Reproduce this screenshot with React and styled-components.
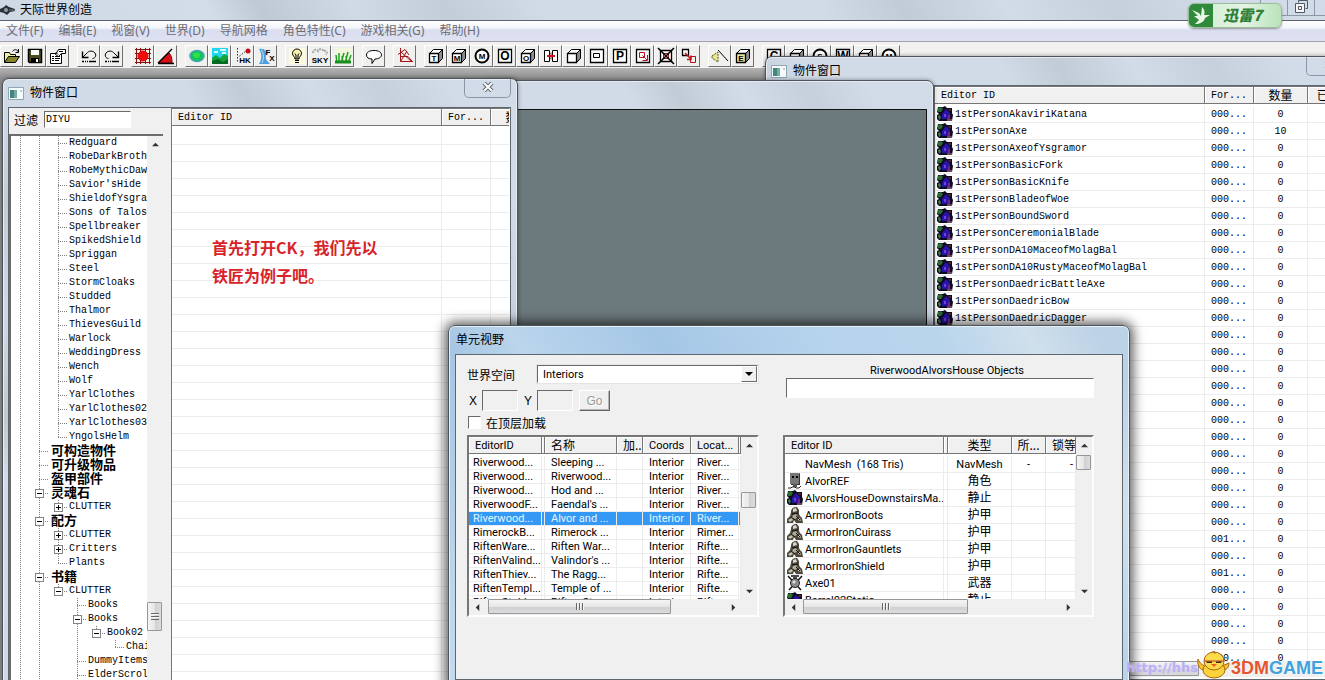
import React from "react";
import styled, { createGlobalStyle, css } from "styled-components";

const GlobalStyle = createGlobalStyle`
  * { box-sizing: border-box; }
  body {
    margin: 0;
    overflow: hidden;
    font-family: "Liberation Sans", "Noto Sans CJK SC", sans-serif;
    font-size: 12px;
    color: #000;
  }
  button, input, select { font: inherit; color: inherit; }
`;

const mono = css`
  font-family: "Liberation Mono", "Noto Sans CJK SC", monospace;
  font-size: 10px;
`;

const small = css`
  font-family: Roboto, "Noto Sans CJK SC", sans-serif;
  font-size: 11px;
`;

const glass = `linear-gradient(60deg, #cfd9e5 0%, #d3dde9 16%, #bfc9d3 20%, #d0dae6 27%,
  #c3cdd8 34%, #d1dbe7 41%, #d1dbe7 62%, #c2ccd7 68%, #d2dce8 76%, #c6d0dc 84%, #d2dce8 92%)`;

const blueGlass = `linear-gradient(60deg, #c6dcee 0%, #b3d0e9 12%, #a6c6e4 22%, #bad5ec 30%,
  #a5c7e6 46%, #b6d3ec 64%, #b9d5ec 78%, #d0e0ec 88%, #bcd2e6 96%)`;

const Desktop = styled.div`
  position: relative;
  display: flex;
  flex-direction: column;
  height: 100vh;
  overflow: hidden;
  background: #a3a3a3;
`;

const AppTitle = styled.header`
  display: flex;
  align-items: center;
  gap: 5px;
  height: 21px;
  flex: none;
  background: ${glass};
  border-bottom: 1px solid #5b6570;
`;

const AppName = styled.h1`
  flex: 1;
  margin: 0;
  font-size: 12px;
  font-weight: normal;
  line-height: 19px;
`;

const Caption = styled.div`
  display: flex;
  align-self: flex-start;
  height: 16px;
  border-bottom: 1px solid #8c98a6;
`;

const CaptionButton = styled.button`
  width: ${(p) => p.$width || "27px"};
  padding: 0;
  background: none;
  border: 0;
  border-left: 1px solid #8c98a6;
`;

const MenuBar = styled.nav`
  display: flex;
  gap: 15px;
  height: 21px;
  flex: none;
  padding: 0 6px;
  align-items: center;
  background: linear-gradient(#fff 0%, #f4f5fb 35%, #dadef0 45%, #dfe2f2 100%);
  border-bottom: 1px solid #a2a2a6;
`;

const MenuItem = styled.button`
  padding: 0;
  border: 0;
  background: none;
  color: #6b6d75;
  font-family: "Noto Sans", "Noto Sans CJK SC", sans-serif;
  font-size: 12px;
  line-height: 18px;
  white-space: nowrap;
`;

const Toolbar = styled.div`
  display: flex;
  gap: 8px;
  height: 26px;
  flex: none;
  padding-top: 3px;
  background: #f2f1f0;
  overflow: hidden;
`;

const ToolGroup = styled.div`
  display: flex;
`;

const ToolButton = styled.button`
  display: flex;
  align-items: center;
  justify-content: center;
  width: 23px;
  height: 22px;
  padding: 0;
  background: #f0f0ee;
  border: 1px solid;
  border-color: #fff #6f6f6f #6f6f6f #fff;
`;

const Workspace = styled.main`
  flex: 1;
  background: linear-gradient(#b4b4b4, #8f8f8f 10px, #909090);
`;

const Frame = styled.section`
  position: absolute;
  display: flex;
  flex-direction: column;
  padding: 0 6px 6px 5px;
  border: 1px solid #4d545c;
  border-radius: 7px 7px 0 0;
  background: ${(p) => (p.$active ? blueGlass : glass)};
  box-shadow: ${(p) =>
    p.$active
      ? "inset 0 0 0 1px #e6f0f8, 0 0 12px 3px rgba(0,0,0,.65)"
      : "inset 0 0 0 1px #e7ecf2, 0 0 4px rgba(0,0,0,.4)"};
`;

const FarObjects = styled(Frame)`
  left: 765px;
  top: 56px;
  right: -35px;
  bottom: -7px;
`;
const RenderFrame = styled(Frame)`
  left: 480px;
  top: 80px;
  width: 454px;
  bottom: -40px;
`;
const NearObjects = styled(Frame)`
  left: 2px;
  top: 78px;
  width: 516px;
  bottom: -40px;
`;
const CellFrame = styled(Frame)`
  left: 448px;
  top: 325px;
  width: 682px;
  bottom: -7px;
  padding-left: 6px;
`;

const FrameTitle = styled.div`
  display: flex;
  align-items: center;
  gap: 5px;
  height: 28px;
  flex: none;
`;

const FrameName = styled.h2`
  flex: 1;
  margin: 0;
  padding-left: 1px;
  font-size: 12px;
  font-weight: normal;
  line-height: 26px;
`;

const CloseButton = styled.button`
  align-self: flex-start;
  width: 47px;
  height: 19px;
  padding: 0;
  background: none;
  border: 1px solid #8b97a5;
  border-top: 0;
  border-radius: 0 0 5px 5px;
`;

const Client = styled.div`
  display: flex;
  flex: 1;
  min-height: 0;
  background: #f0f0f0;
  border: 1px solid #5e666e;
`;

const Viewport3D = styled(Client)`
  background: #6c797d;
  border-color: #111;
`;

const Side = styled.aside`
  display: flex;
  flex-direction: column;
  width: 162px;
  flex: none;
`;

const FilterRow = styled.label`
  display: flex;
  align-items: center;
  gap: 6px;
  height: 26px;
  flex: none;
  padding: 0 5px 4px;
`;

const TextBox = styled.input`
  min-width: 0;
  width: ${(p) => p.$width || "100%"};
  height: ${(p) => p.$height || "20px"};
  padding: 0 0 0 1px;
  border: 1px solid;
  border-color: #6a6a6a #fff #fff #6a6a6a;
  border-radius: 0;
  outline: 0;
  background: ${(p) => (p.disabled ? "#f0f0f0" : "#fff")};
`;

const FilterBox = styled(TextBox)`
  ${mono}
`;

const TreeBox = styled.div`
  display: flex;
  flex: 1;
  min-height: 0;
  margin-right: 8px;
  background: #fff;
  border: 2px solid #6c6c6c;
  border-right: 0;
`;

const TreeList = styled.ul`
  flex: 1;
  min-width: 0;
  margin: 0;
  padding: 0;
  overflow: hidden;
  list-style: none;
  ${mono}
`;

const TreeRow = styled.li`
  display: flex;
  height: 14px;
  line-height: 14px;
  white-space: nowrap;
`;

const vDots = "repeating-linear-gradient(#808080 0 1px, transparent 1px 2px)";
const hDots = "repeating-linear-gradient(90deg, #808080 0 1px, transparent 1px 2px)";

const guides = {
  v: `${vDots} 9px 0 / 1px 100% no-repeat`,
  t: `${vDots} 9px 0 / 1px 100% no-repeat, ${hDots} 9px 7px / 9px 1px no-repeat`,
  l: `${vDots} 9px 0 / 1px 7px no-repeat, ${hDots} 9px 7px / 9px 1px no-repeat`,
  "-": "none",
};

const Guide = styled.span`
  display: flex;
  align-items: center;
  justify-content: center;
  width: 19px;
  flex: none;
  background: ${(p) => guides[p.$kind]};
`;

const Toggle = styled.button`
  width: 9px;
  height: 9px;
  padding: 0;
  border: 1px solid #848484;
  background:
    linear-gradient(#000, #000) 50% 50% / 5px 1px no-repeat,
    ${(p) => (p.$open ? "" : "linear-gradient(#000, #000) 50% 50% / 1px 5px no-repeat,")}
    #fff;
`;

const TreeText = styled.span`
  padding-left: 1px;
  ${(p) =>
    p.$bold &&
    css`
      padding-left: 2px;
      font-family: "Noto Sans CJK SC", sans-serif;
      font-size: 13px;
      font-weight: bold;
      line-height: 12px;
    `}
`;

const Bar = styled.div`
  display: flex;
  flex-direction: ${(p) => (p.$vertical ? "column" : "row")};
  flex: none;
  ${(p) => (p.$vertical ? "width: 16px;" : "height: 16px;")}
  background: #f0f0f0;
`;

const Track = styled.div`
  flex: 1;
  min-width: 0;
  min-height: 0;
  display: flex;
  flex-direction: ${(p) => (p.$vertical ? "column" : "row")};
`;

const Thumb = styled.div`
  display: flex;
  align-items: center;
  justify-content: center;
  flex: none;
  border: 1px solid #979797;
  border-radius: 1px;
  background: linear-gradient(
    ${(p) => (p.$vertical ? "90deg" : "180deg")},
    #f5f5f5,
    #e6e6e8 50%,
    #cfd0d2 52%,
    #dcdcde
  );
  ${(p) =>
    p.$vertical
      ? css`
          width: 15px;
          height: ${p.$size};
          margin-top: ${p.$start};
        `
      : css`
          height: 15px;
          width: ${p.$size};
          margin-left: ${p.$start};
        `}
`;

const Grip = styled.i`
  width: 8px;
  height: 7px;
  background: repeating-linear-gradient(
    ${(p) => (p.$vertical ? "180deg" : "90deg")},
    #666 0 1px,
    #f4f4f4 1px 2px,
    transparent 2px 3px
  );
`;

const Arrow = styled.button`
  display: flex;
  align-items: center;
  justify-content: center;
  width: 16px;
  height: 16px;
  flex: none;
  padding: 0;
  border: 0;
  background: none;
`;

const ListBox = styled.div`
  display: flex;
  flex-direction: column;
  flex: 1;
  min-width: 0;
  min-height: 0;
  background: #fff;
  border: 2px solid;
  border-color: #767676 #fdfdfd #fdfdfd #767676;
`;

const ObjectBox = styled(ListBox)`
  border-top-width: 1px;
  border-left-width: 1px;
  border-right-width: 1px;
`;

const ListBody = styled.div`
  display: flex;
  flex: 1;
  min-height: 0;
`;

const TableWrap = styled.div`
  flex: 1;
  min-width: 0;
  overflow: hidden;
`;

const ScrollRow = styled.div`
  padding-right: 16px;
  background: #f0f0f0;
`;

const Table = styled.table`
  width: 100%;
  table-layout: fixed;
  border-collapse: separate;
  border-spacing: 0;
  ${(p) => (p.$mono ? mono : small)}

  th, td {
    padding: 0 0 0 6px;
    text-align: left;
    font-weight: normal;
    white-space: nowrap;
    overflow: hidden;
  }
  th {
    height: 17px;
    padding-top: 2px;
    line-height: 14px;
    background: #f0f0f0;
    border-right: 1px solid #777;
    border-bottom: 1px solid #777;
    box-shadow: inset 1px 1px #fff;
  }
  th:lang(zh) {
    padding-top: 0;
    font-family: "Noto Sans CJK SC", sans-serif;
    font-size: 12px;
  }
  tbody::before {
    content: "";
    display: table-row;
    height: 2px;
  }
  td {
    height: ${(p) => p.$row};
    line-height: 13px;
    border-right: 1px solid #ececec;
    border-bottom: 1px solid #ececec;
  }
  td:first-child {
    padding-left: 4px;
  }
`;

const Row = styled.tr`
  ${(p) =>
    p.$selected &&
    css`
      background: #3498f5;
      color: #e4f6ff;
    `}
`;

const Th = styled.th`
  && {
    ${(p) => p.$center && "text-align: center; padding: 0;"}
  }
`;

const Td = styled.td`
  && {
    ${(p) => p.$center && "text-align: center; padding: 0;"}
    ${(p) => p.$zh && "font-size: 12px;"}
    ${(p) => p.$right && "text-align: right; padding: 0 2px 0 0;"}
  }
`;

const NameCell = styled.span`
  display: flex;
  align-items: center;
  gap: 2px;
  height: 16px;
  margin-left: -2px;
  white-space: pre;
  svg { flex: none; }
`;

const Note = styled.p`
  position: absolute;
  left: 209px;
  top: 154px;
  margin: 0;
  color: #d8232a;
  font-family: "Noto Sans CJK SC", sans-serif;
  font-size: 16px;
  font-weight: bold;
  line-height: 28px;
`;

const CellGrid = styled.div`
  flex: 1;
  display: grid;
  grid-template-columns: 292fr 311fr;
  grid-template-rows: 71px 182px;
  gap: 0 24px;
  padding: 9px 28px 0 11px;
`;

const Stack = styled.div`
  display: flex;
  flex-direction: column;
`;

const SpaceRow = styled.label`
  display: flex;
  align-items: center;
  gap: 21px;
  white-space: nowrap;
`;

const SelectWrap = styled.span`
  position: relative;
  flex: 1;
  display: flex;
`;

const Select = styled.select`
  flex: 1;
  height: 20px;
  padding: 0 5px;
  appearance: none;
  && { ${small} }
  background: #fff;
  border: 2px solid;
  border-color: #6a6a6a #fff #fff #6a6a6a;
  border-radius: 0;
  outline: 1px solid #e4e4e4;
  outline-offset: -1px;
`;

const DropMark = styled.span`
  position: absolute;
  right: 2px;
  top: 2px;
  display: flex;
  align-items: center;
  justify-content: center;
  width: 16px;
  height: 16px;
  pointer-events: none;
  background: #f0f0f0;
  border: 1px solid;
  border-color: #fff #6a6a6a #6a6a6a #fff;
`;

const CoordRow = styled.div`
  display: flex;
  gap: 6px;
  margin-top: 6px;
  padding-left: 2px;
`;

const Coord = styled.label`
  display: flex;
  align-items: center;
  gap: 5px;
`;

const GoButton = styled.button`
  width: 31px;
  height: 21px;
  padding: 0;
  font-size: 12px;
  background: #f0f0f0;
  border: 1px solid;
  border-color: #fff #666 #666 #fff;
  box-shadow: inset -1px -1px #b4b4b4;
  &:disabled {
    color: #9a9a9a;
    text-shadow: 1px 1px #fff;
  }
`;

const CheckRow = styled.label`
  display: flex;
  align-items: center;
  gap: 5px;
  height: 17px;
  margin-top: 3px;
`;

const Check = styled.input`
  appearance: none;
  width: 13px;
  height: 13px;
  margin: 0 0 0 1px;
  background: #fff;
  border: 1px solid;
  border-color: #6a6a6a #fff #fff #6a6a6a;
`;

const SearchLabel = styled.label`
  display: flex;
  flex-direction: column;
  align-items: center;
  padding-left: 3px;
  ${small}
`;

const SearchCaption = styled.span`
  padding-left: 14px;
  line-height: 14px;
`;

const ThunderBadge = styled.div`
  position: absolute;
  right: 43px;
  top: 3px;
  display: flex;
  width: 94px;
  height: 25px;
  overflow: hidden;
  border: 1px solid #9dbd9d;
  border-radius: 6px;
  background: linear-gradient(90deg, #cdeccf, #e4f4e4 60%, #b9e3ba);
  box-shadow: 0 1px 2px rgba(0, 0, 0, 0.4);
`;

const ThunderName = styled.span`
  flex: 1;
  padding-left: 10px;
  color: #2f8038;
  font-family: "Noto Sans CJK SC", sans-serif;
  font-size: 15px;
  font-weight: 900;
  font-style: italic;
  line-height: 22px;
`;

const SiteLink = styled.a`
  position: absolute;
  right: 127px;
  bottom: 4px;
  color: #bdb0f2;
  font-family: "DejaVu Sans", sans-serif;
  font-size: 13px;
  font-weight: bold;
  line-height: 16px;
  text-decoration: none;
  text-shadow: 0 0 2px #d9d2fa;
`;

const SiteLogo = styled.div`
  position: absolute;
  right: 2px;
  bottom: 1px;
  display: flex;
  align-items: flex-end;
  color: #e4562f;
  font-family: "Liberation Sans", sans-serif;
  font-size: 18px;
  font-weight: bold;
  line-height: 22px;
  text-shadow: 0 0 2px #fff;
  b { color: #3fa3dc; }
`;

/* ---------- icons ---------- */

const Pic = ({ children, size = 18 }) => (
  <svg width={size} height={size} viewBox="0 0 18 18" fill="none" stroke="#000" strokeWidth="1" aria-hidden="true">
    {children}
  </svg>
);

const Letter = ({ x = 7, y = 14, size = 8, children }) => (
  <text x={x} y={y} fontSize={size} fontWeight="bold" fontFamily="Liberation Sans, sans-serif" textAnchor="middle" fill="#000" stroke="none">
    {children}
  </text>
);

const Cube = ({ letter, tint = "#fff" }) => (
  <Pic>
    <path d="M11.5 6.5 15.5 2.5V11.5L11.5 15.5z" fill="#8d8d8d" />
    <path d="M2.5 6.5 6.5 2.5H15.5L11.5 6.5z" fill="#fff" />
    <path d="M2.5 6.5H11.5V15.5H2.5z" fill={tint} strokeWidth="1.3" />
    {letter && <Letter>{letter}</Letter>}
  </Pic>
);

const Ring = ({ letter }) => (
  <Pic>
    <circle cx="9" cy="9" r="6.5" fill="#fff" strokeWidth="2" />
    <Letter x={9} y={12}>{letter}</Letter>
  </Pic>
);

const Square = ({ letter }) => (
  <Pic>
    <path d="M2.5 2.5H15.5V15.5H2.5z" fill="#fff" strokeWidth="1.3" />
    <Letter x={9} y={13} size={12}>{letter}</Letter>
  </Pic>
);

const icons = {
  open: (
    <Pic>
      <path d="M1.5 15.5V5.5H6.5L7.5 7.5H12.5V9.5" fill="#f1eda2" />
      <path d="M1.5 15.5 5.5 9.5H16.5L12.5 15.5z" fill="#87852b" />
      <path d="M9.5 4.5C11 2 14 2 15.5 5M15.5 2V5.5H12.5" />
    </Pic>
  ),
  save: (
    <Pic>
      <path d="M2.5 2.5H15.5V15.5H3.5L2.5 14.5z" fill="#4c4c1f" strokeWidth="1.5" />
      <path d="M5 3H13V8H5z" fill="#fff" stroke="none" />
      <path d="M5 11H13V15H5z" fill="#000" stroke="none" />
      <path d="M10 12H12V15H10z" fill="#fff" stroke="none" />
    </Pic>
  ),
  props: (
    <Pic>
      <path d="M1.5 6.5H12.5V16.5H1.5z" fill="#fff" />
      <path d="M3 9.5H5M6 9.5H11M3 11.5H5M6 11.5H11M3 13.5H5M6 13.5H10" />
      <path d="M6.5 7.5 9.5 2.5H16.5V6.5H12.5L9.5 9.5z" fill="#fff" />
      <path d="M10 4.5H14M7 5.5 9 7.5" />
    </Pic>
  ),
  undo: (
    <Pic>
      <path d="M2.5 4.5V10.5H8.5" strokeWidth="1.4" />
      <path d="M3 10 7.5 5.5C10 3 14.500 4 15.500 7S14 11.500 12.500 11.500" />
      <path d="M2 14.500H4M5 14.500H6M7 14.500H8M9 14.500H16" strokeWidth="1.500" />
    </Pic>
  ),
  redo: (
    <Pic>
      <path d="M15.5 4.5V10.5H9.500" strokeWidth="1.4" />
      <path d="M15 10 10.500 5.500C8 3 3.500 4 2.500 7S4 11.500 5.500 11.500" />
      <path d="M2 14.500H4M5 14.500H6M7 14.500H8M9 14.500H16" strokeWidth="1.500" />
    </Pic>
  ),
  gridSnap: (
    <Pic>
      <path d="M2.5 1V17M6.5 1V17M11.5 1V17M15.5 1V17M1 2.5H17M1 6.5H17M1 11.5H17M1 15.5H17" stroke="#811" />
      <circle cx="9" cy="9" r="5" fill="#f20d0d" stroke="#d00" />
    </Pic>
  ),
  angleSnap: (
    <Pic>
      <path d="M1 16 12 6C15 9 15 13 15 16z" fill="#d40f18" stroke="#700" />
      <path d="M1 16.5H17M1 16 15 2" strokeWidth="1.3" />
    </Pic>
  ),
  globe: (
    <Pic>
      <ellipse cx="9" cy="9" rx="7" ry="5.500" fill="#12c45a" stroke="#4aa3b4" strokeWidth="1.500" />
      <path d="M5 7C7 5 11 5 12 7S10 12 8 11 5 10 5 7z" fill="#2de04c" stroke="none" />
    </Pic>
  ),
  land: (
    <Pic>
      <path d="M1 1H17V17H1z" fill="#21d7ee" stroke="none" />
      <path d="M3 5H7M9 3H15M11 6H15" stroke="#d8fbff" strokeWidth="2" />
      <path d="M1 11 5 8 9 11 13 7 17 9V17H1z" fill="#13a63c" stroke="none" />
      <path d="M1 17V14L7 12 12 15 17 12V17z" fill="#066b21" stroke="none" />
    </Pic>
  ),
  havok: (
    <Pic>
      <path d="M3.5 1V16M3 11 12 4" stroke="#333" strokeDasharray="1.5 1.5" />
      <circle cx="14" cy="4" r="2.5" fill="#c3101e" stroke="none" />
      <Letter x={11} y={16} size={8}>HK</Letter>
    </Pic>
  ),
  effects: (
    <Pic>
      <path d="M2 2C8 1 10 5 9 9S11 14 13 17H2C5 12 5 7 2 2z" fill="#4f9fe0" stroke="none" />
      <path d="M4 3C7 6 7 12 5 16" stroke="#bfe0f8" />
      <Letter x={11} y={8} size={8}>F</Letter>
      <Letter x={15} y={14} size={8}>X</Letter>
    </Pic>
  ),
  light: (
    <Pic>
      <path d="M1 1H17V17H1z" fill="#fdfae0" stroke="none" />
      <path d="M7 12C7 9.5 4.5 9 4.5 6.5A4.5 4.5 0 0 1 13.5 6.5C13.5 9 11 9.5 11 12z" fill="#f6f2b4" />
      <path d="M7 6.5 8 8V12M11 6.5 10 8V12M7 13.5H11M7 15.5H11" />
    </Pic>
  ),
  sky: (
    <Pic>
      <path d="M2 6C2 2 6 2 7 4 9 1 12 2 12 4 15 3 17 5 15 8" stroke="#a9a9a9" strokeWidth="2" strokeDasharray="2 1" />
      <Letter x={9} y={16} size={8}>SKY</Letter>
    </Pic>
  ),
  grass: (
    <Pic>
      <path d="M1 1H17V17H1z" fill="#f3f8dc" stroke="none" />
      <path d="M3 16 2 8M5 16 5 6M7 16 10 6M9 16 8 9M11 16 14 5M13 16 12 9M14 16 17 8" stroke="#1ba321" strokeWidth="1.5" />
      <path d="M1 15H17" stroke="#1c8a24" strokeWidth="3" />
    </Pic>
  ),
  talk: (
    <Pic>
      <path d="M9 3.5C14 3.5 16.5 5.5 16.5 8S13 12 10 12L7 16.5V12C3.5 12 1.5 10.5 1.5 8S4 3.5 9 3.5z" fill="#fff" />
    </Pic>
  ),
  navmesh: (
    <Pic>
      <path d="M4.5 1V14.5H17M2 7.500 9 2.500 13 8M4.500 14.500 11 4M5 5 15.500 14.500M5 9.500H12L16 14" stroke="#a3141b" />
    </Pic>
  ),
  portal: (
    <Pic>
      <path d="M2.5 3.5H7.5V14.5H2.5zM10.5 3.5H15.5V14.5H10.5z" fill="#fff" />
      <path d="M5 9H13" stroke="#c3141b" strokeWidth="2" />
      <path d="M9 5.500V12.500" stroke="#c3141b" />
    </Pic>
  ),
  room: (
    <Pic>
      <path d="M2.5 2.5H15.5V15.5H2.5z" fill="#fff" strokeWidth="1.3" />
      <path d="M5.5 6.5H11.5V10.5H5.5z" />
    </Pic>
  ),
  roomLink: (
    <Pic>
      <path d="M2.5 2.5H15.5V15.5H2.5z" fill="#fff" strokeWidth="1.3" />
      <path d="M5.5 5.5H10.5V10.5H5.5zM13.5 8V13.5H8.5M8.5 8.5 13 13" stroke="#b5131b" />
    </Pic>
  ),
  cross: (
    <Pic>
      <path d="M3.5 3.5H14.5V14.5H3.5z" fill="#fff" strokeWidth="1.3" />
      <path d="M6.5 6.5H11.5V11.5H6.5z" stroke="#b5131b" />
      <path d="M1 1 17 17M17 1 1 17" strokeWidth="1.6" />
    </Pic>
  ),
  link: (
    <Pic>
      <path d="M2.5 2.5H8.5V8.5H2.5z" fill="#fff" strokeWidth="1.3" />
      <path d="M10.5 9.5H15.5V15.5H10.5z" stroke="#a3141b" />
      <path d="M5 6 11 12M11 8.500V12.500H7" stroke="#c3141b" strokeWidth="1.500" />
    </Pic>
  ),
  sound: (
    <Pic>
      <path d="M7 3 17 14" />
      <path d="M1 9 7 5V15L1 11z" fill="#e6e68a" stroke="#55551c" strokeDasharray="2 1" />
    </Pic>
  ),
};

const toolGroups = [
  [["打开", icons.open], ["保存", icons.save], ["属性", icons.props]],
  [["撤销", icons.undo], ["重做", icons.redo]],
  [["网格", icons.gridSnap], ["角度", icons.angleSnap]],
  [["世界", icons.globe], ["地形", icons.land], ["物理", icons.havok], ["特效", icons.effects]],
  [["灯光", icons.light], ["天空", icons.sky], ["草地", icons.grass]],
  [["对话", icons.talk]],
  [["导航", icons.navmesh]],
  [
    ["T", <Cube letter="T" />],
    ["M", <Cube letter="M" />],
    ["标记", <Ring letter="M" />],
    ["遮挡", <Square letter="O" />],
    ["O", <Cube letter="O" />],
    ["入口", icons.portal],
    ["盒子", <Cube />],
    ["房间", icons.room],
    ["平面", <Square letter="P" />],
    ["房间连接", icons.roomLink],
    ["删除连接", icons.cross],
    ["连接", icons.link],
  ],
  [["声音", icons.sound], ["声音盒", <Cube letter="E" tint="#e6e6a0" />]],
  [
    ["C", <Square letter="C" />],
    ["T2", <Cube letter="T" />],
    ["S", <Ring letter="S" />],
    ["W", <Square letter="W" />],
    ["L", <Cube letter="L" />],
    ["M2", <Ring letter="M" />],
  ],
];

const HouseIcon = () => (
  <svg width="16" height="16" viewBox="0 0 16 16" aria-hidden="true">
    <path d="M1 1H6L8 0 10 2H15V7L16 9 15 15H2L0 13V9L2 8 0 6z" fill="#0b0b22" />
    <path d="M1 2 4 1 6 3 4 6 1 6z" fill="#2d6b35" />
    <path d="M1 10 3 9 4 12 2 14z" fill="#3d7b49" />
    <path d="M5 8 9 3 13 7V13H5z" fill="#2a13a5" />
    <path d="M7 8H9V11H7z" fill="#6544e0" />
    <path d="M11 3H14V5H12z" fill="#57202e" />
    <path d="M11 9H13V13H11z" fill="#7d1f8d" />
    <path d="M10 14H15" stroke="#c77fa5" />
  </svg>
);

const ActorIcon = () => (
  <svg width="16" height="16" viewBox="0 0 16 16" aria-hidden="true">
    <path d="M3 0H13V11H3z" fill="#777" />
    <path d="M12 1H13V12H4V11H12z" fill="#333" />
    <path d="M5 3H7V5H5zM9 3H11V5H9z" fill="#000" />
    <path d="M6 11H10V14H6z" fill="#555" />
    <path d="M1 15H4L5 14H8L9 15H12L14 13" stroke="#222" fill="none" />
  </svg>
);

const ArmorIcon = () => (
  <svg width="16" height="16" viewBox="0 0 16 16" aria-hidden="true">
    <path d="M4 5C4 1 7 0 10 0L12 3V7L13 9 15 11 16 16H9L7 13 6 16H0V12L3 9z" fill="#4d483d" />
    <path d="M6 2 9 1 10 4 6 5z" fill="#d9d7cc" />
    <path d="M6 8 9 7 11 10 8 12 5 11z" fill="#b1aa94" />
    <path d="M1 13 5 11 6 13 3 15zM11 11 13 11 14 14 11 13z" fill="#c9c3ad" />
    <path d="M5 7 11 6M9 9 13 13M4 10 8 13" stroke="#111" fill="none" />
  </svg>
);

const AxeIcon = () => (
  <svg width="16" height="16" viewBox="0 0 16 16" aria-hidden="true">
    <path d="M1 1 14 15M15 1 2 15M4 1H12M6 3H10" stroke="#111" strokeWidth="1.5" fill="none" />
    <circle cx="8" cy="8" r="4.5" fill="#8a8a8a" stroke="#222" />
    <circle cx="7" cy="7" r="1.5" fill="#e2e2e2" />
  </svg>
);

const listIcons = { house: <HouseIcon />, actor: <ActorIcon />, armor: <ArmorIcon />, axe: <AxeIcon /> };

const WindowIcon = () => (
  <svg width="16" height="13" viewBox="0 0 16 13" aria-hidden="true">
    <path d="M.5 .5H15.5V12.5H.5z" fill="#f5fafa" stroke="#8fa6b3" />
    <path d="M2 3H9V11H2z" fill="#3f8581" />
    <path d="M6 3H9V11H6z" fill="#79aba4" />
    <path d="M12 3H14V5H12z" fill="#b8cfd8" />
  </svg>
);

const arrows = {
  up: "M0 6 4 2 8 6z",
  down: "M0 2 4 6 8 2z",
  left: "M6 0 2 4 6 8z",
  right: "M2 0 6 4 2 8z",
};

const ArrowButton = ({ dir }) => (
  <Arrow aria-label={dir}>
    <svg width="7" height="7" viewBox="0 0 8 8">
      <path d={arrows[dir]} fill="#333" />
    </svg>
  </Arrow>
);

const ScrollBar = ({ vertical, start, size, grip }) => (
  <Bar $vertical={vertical}>
    <ArrowButton dir={vertical ? "up" : "left"} />
    <Track $vertical={vertical}>
      <Thumb $vertical={vertical} $start={start} $size={size}>
        {grip && <Grip $vertical={vertical} />}
      </Thumb>
    </Track>
    <ArrowButton dir={vertical ? "down" : "right"} />
  </Bar>
);

/* ---------- data ---------- */

const menus = ["文件(F)", "编辑(E)", "视窗(V)", "世界(D)", "导航网格", "角色特性(C)", "游戏相关(G)", "帮助(H)"];

const armorNames = [
  "Redguard", "RobeDarkBrotherhood", "RobeMythicDawn", "Savior'sHide", "ShieldofYsgramor",
  "Sons of Talos", "Spellbreaker", "SpikedShield", "Spriggan", "Steel", "StormCloaks",
  "Studded", "Thalmor", "ThievesGuild", "Warlock", "WeddingDress", "Wench", "Wolf",
  "YarlClothes", "YarlClothes02", "YarlClothes03",
];

// guides: one letter per tree level (v line, t branch, l last branch, - blank)
const tree = [
  ...armorNames.map((text) => ({ guides: "vvt", text })),
  { guides: "vvl", text: "YngolsHelm" },
  { guides: "vt", text: "可构造物件", bold: true },
  { guides: "vt", text: "可升级物品", bold: true },
  { guides: "vt", text: "盔甲部件", bold: true },
  { guides: "vt", text: "灵魂石", bold: true, box: "open" },
  { guides: "vvl", text: "CLUTTER", box: "closed" },
  { guides: "vt", text: "配方", bold: true, box: "open" },
  { guides: "vvt", text: "CLUTTER", box: "closed" },
  { guides: "vvt", text: "Critters", box: "closed" },
  { guides: "vvl", text: "Plants" },
  { guides: "vt", text: "书籍", bold: true, box: "open" },
  { guides: "vvl", text: "CLUTTER", box: "open" },
  { guides: "vv-t", text: "Books" },
  { guides: "vv-t", text: "Books", box: "open" },
  { guides: "vv-vl", text: "Book02", box: "open" },
  { guides: "vv-v-l", text: "Chairs" },
  { guides: "vv-t", text: "DummyItems" },
  { guides: "vv-t", text: "ElderScrolls" },
];

const objectNames = [
  "AkaviriKatana", "Axe", "AxeofYsgramor", "BasicFork", "BasicKnife", "BladeofWoe",
  "BoundSword", "CeremonialBlade", "DA10MaceofMolagBal", "DA10RustyMaceofMolagBal",
  "DaedricBattleAxe", "DaedricBow", "DaedricDagger",
];

const objects = Array.from({ length: 33 }, (_, i) => ({
  id: objectNames[i] ? "1stPerson" + objectNames[i] : "",
  form: i === 25 || i === 27 ? "001..." : "000...",
  count: i === 1 ? 10 : 0,
}));

const cells = [
  ["Riverwood...", "Sleeping ...", "River..."],
  ["Riverwood...", "Riverwood...", "River..."],
  ["Riverwood...", "Hod and ...", "River..."],
  ["RiverwoodF...", "Faendal's ...", "River..."],
  ["Riverwood...", "Alvor and ...", "River..."],
  ["RimerockB...", "Rimerock ...", "Rimer..."],
  ["RiftenWare...", "Riften War...", "Rifte..."],
  ["RiftenValind...", "Valindor's ...", "Rifte..."],
  ["RiftenThiev...", "The Ragg...", "Rifte..."],
  ["RiftenTempl...", "Temple of ...", "Rifte..."],
  ["RiftenStabl...", "Riften Sta...", "Rifte..."],
];

const refs = [
  [null, "NavMesh  (168 Tris)", "NavMesh"],
  ["actor", "AlvorREF", "角色"],
  ["house", "AlvorsHouseDownstairsMa...", "静止"],
  ["armor", "ArmorIronBoots", "护甲"],
  ["armor", "ArmorIronCuirass", "护甲"],
  ["armor", "ArmorIronGauntlets", "护甲"],
  ["armor", "ArmorIronShield", "护甲"],
  ["axe", "Axe01", "武器"],
  ["house", "Barrel02Static", "静止"],
];

/* ---------- parts ---------- */

const Columns = ({ widths }) => (
  <colgroup>
    {widths.map((w, i) => (
      <col key={i} width={w || undefined} />
    ))}
  </colgroup>
);

const ObjectTable = ({ rows }) => (
  <TableWrap>
    <Table $mono $row="17px">
      <Columns widths={[270, 49, 54, null]} />
      <thead>
        <tr>
          <Th>Editor ID</Th>
          <Th>For...</Th>
          <Th $center lang="zh">数量</Th>
          <Th lang="zh">&nbsp;已</Th>
        </tr>
      </thead>
      <tbody>
        {rows.map((r, i) => (
          <tr key={i}>
            <Td>
              {r && (
                <NameCell>
                  <HouseIcon />
                  {r.id}
                </NameCell>
              )}
            </Td>
            <Td>{r && r.form}</Td>
            <Td $center>{r && r.count}</Td>
            <Td />
          </tr>
        ))}
      </tbody>
    </Table>
  </TableWrap>
);

const ObjectTitle = () => (
  <FrameTitle>
    <WindowIcon />
    <FrameName>物件窗口</FrameName>
    <CloseButton aria-label="关闭">
      <svg width="12" height="10" viewBox="0 0 12 10">
        <path d="M2 1 10 9M10 1 2 9" stroke="#5b6470" strokeWidth="4" />
        <path d="M2 1 10 9M10 1 2 9" stroke="#fff" strokeWidth="2" />
      </svg>
    </CloseButton>
  </FrameTitle>
);

const TreePanel = () => (
  <Side>
    <FilterRow>
      过滤
      <FilterBox $width="87px" $height="17px" defaultValue="DIYU" />
    </FilterRow>
    <TreeBox>
      <TreeList>
        {tree.map((node, i) => (
          <TreeRow key={i}>
            {node.guides.split("").map((g, n) => (
              <Guide key={n} $kind={g}>
                {node.box && n === node.guides.length - 1 && (
                  <Toggle $open={node.box === "open"} aria-label={node.text} />
                )}
              </Guide>
            ))}
            <TreeText $bold={node.bold}>{node.text}</TreeText>
          </TreeRow>
        ))}
      </TreeList>
      <ScrollBar vertical start="450px" size="29px" grip />
    </TreeBox>
  </Side>
);

const CellTable = () => (
  <ListBox>
    <ListBody>
      <TableWrap>
        <Table $row="14px">
          <Columns widths={[73, 3, 72, 26, 48, 48, null]} />
          <thead>
            <tr>
              <Th>EditorID</Th>
              <Th />
              <Th lang="zh">名称</Th>
              <Th lang="zh">加..</Th>
              <Th>Coords</Th>
              <Th>Locat...</Th>
              <Th />
            </tr>
          </thead>
          <tbody>
            {cells.map(([id, name, loc], i) => (
              <Row key={i} $selected={i === 4}>
                <Td>{id}</Td>
                <Td />
                <Td>{name}</Td>
                <Td />
                <Td>Interior</Td>
                <Td>{loc}</Td>
                <Td />
              </Row>
            ))}
          </tbody>
        </Table>
      </TableWrap>
      <ScrollBar vertical start="39px" size="16px" />
    </ListBody>
    <ScrollRow>
      <ScrollBar start="3px" size="183px" grip />
    </ScrollRow>
  </ListBox>
);

const RefTable = () => (
  <ListBox>
    <ListBody>
      <TableWrap>
        <Table $row="17px">
          <Columns widths={[159, 4, 64, 34, null]} />
          <thead>
            <tr>
              <Th>Editor ID</Th>
              <Th />
              <Th $center lang="zh">类型</Th>
              <Th $center lang="zh">所...</Th>
              <Th lang="zh">锁等</Th>
            </tr>
          </thead>
          <tbody>
            {refs.map(([icon, name, type], i) => (
              <tr key={i}>
                <Td>
                  <NameCell>
                    {icon ? listIcons[icon] : <svg width="16" height="16" />}
                    {name}
                  </NameCell>
                </Td>
                <Td />
                <Td $center $zh={i > 0}>{type}</Td>
                <Td $center>{i === 0 && "-"}</Td>
                <Td $right>{i === 0 && "-"}</Td>
              </tr>
            ))}
          </tbody>
        </Table>
      </TableWrap>
      <ScrollBar vertical start="2px" size="15px" />
    </ListBody>
    <ScrollRow>
      <ScrollBar start="2px" size="165px" grip />
    </ScrollRow>
  </ListBox>
);

const CellWindow = () => (
  <CellFrame $active>
    <FrameTitle>
      <FrameName>单元视野</FrameName>
    </FrameTitle>
    <Client>
      <CellGrid>
        <Stack>
          <SpaceRow>
            世界空间
            <SelectWrap>
              <Select defaultValue="Interiors">
                <option>Interiors</option>
              </Select>
              <DropMark>
                <svg width="8" height="5" viewBox="0 0 8 5">
                  <path d="M0 0H8L4 4z" fill="#000" />
                </svg>
              </DropMark>
            </SelectWrap>
          </SpaceRow>
          <CoordRow>
            <Coord>
              X <TextBox disabled $width="36px" $height="21px" />
            </Coord>
            <Coord>
              Y <TextBox disabled $width="36px" $height="21px" />
            </Coord>
            <GoButton disabled>Go</GoButton>
          </CoordRow>
          <CheckRow>
            <Check type="checkbox" />
            在顶层加载
          </CheckRow>
        </Stack>
        <SearchLabel>
          <SearchCaption>RiverwoodAlvorsHouse Objects</SearchCaption>
          <TextBox />
        </SearchLabel>
        <CellTable />
        <RefTable />
      </CellGrid>
    </Client>
  </CellFrame>
);

const Chick = () => (
  <svg width="34" height="28" viewBox="0 0 34 28" aria-hidden="true">
    <path d="M1 8C3 13 6 14 8 15L6 19C2 18 0 13 1 8zM32 12C32 17 29 19 26 19L25 15z" fill="#f6c22c" stroke="#a8660e" />
    <ellipse cx="17" cy="19" rx="11" ry="8" fill="#fbd23b" stroke="#a8660e" />
    <ellipse cx="17" cy="10" rx="10" ry="9" fill="#fddc4c" stroke="#a8660e" />
    <path d="M7 10H27" stroke="#c0392b" />
    <path d="M9 10.5H15V12H10zM19 10.5H25L24 12H19z" fill="#3a2412" />
    <path d="M14 13H20L17 16z" fill="#ee5a1f" />
    <path d="M14 2 17 0 18 3" fill="none" stroke="#a8660e" />
  </svg>
);

const App = () => {
  return (
    <>
      <GlobalStyle />
      <Desktop>
        <AppTitle>
          <svg width="15" height="12" viewBox="0 0 15 12" aria-hidden="true">
            <path d="M0 5 4 3 6 1 9 3 15 5V7L10 8 7 11 4 9 0 8z" fill="#2d3238" />
            <circle cx="6" cy="6" r="2" fill="#8e9aa8" />
            <path d="M9 6H15" stroke="#6f7882" />
          </svg>
          <AppName>天际世界创造</AppName>
          <Caption>
            <CaptionButton aria-label="最小化" />
            <CaptionButton aria-label="还原">
              <svg width="13" height="13" viewBox="0 0 13 13" fill="none" stroke="#4e5966">
                <path d="M3.5 2.5V.5H12.5V8.5H10.5" />
                <path d="M.5 3.5H9.5V12.5H.5zM3.5 6.5H6.5V9.5H3.5z" fill="#f4f6f8" />
              </svg>
            </CaptionButton>
            <CaptionButton aria-label="关闭" $width="11px" />
          </Caption>
        </AppTitle>
        <MenuBar>
          {menus.map((m) => (
            <MenuItem key={m}>{m}</MenuItem>
          ))}
        </MenuBar>
        <Toolbar>
          {toolGroups.map((group, i) => (
            <ToolGroup key={i}>
              {group.map(([label, icon]) => (
                <ToolButton key={label} aria-label={label}>
                  {icon}
                </ToolButton>
              ))}
            </ToolGroup>
          ))}
        </Toolbar>
        <Workspace />

        <FarObjects>
          <ObjectTitle />
          <Client>
            <Side />
            <ObjectBox>
              <ListBody>
                <ObjectTable rows={objects} />
                <ScrollBar vertical start="0" size="20px" />
              </ListBody>
              <ScrollRow>
                <ScrollBar start="0" size="248px" grip />
              </ScrollRow>
            </ObjectBox>
          </Client>
        </FarObjects>

        <RenderFrame>
          <FrameTitle />
          <Viewport3D />
        </RenderFrame>

        <NearObjects>
          <ObjectTitle />
          <Client>
            <TreePanel />
            <ObjectBox>
              <ObjectTable rows={Array(36).fill(null)} />
            </ObjectBox>
          </Client>
          <Note>
            首先打开CK，我们先以
            <br />
            铁匠为例子吧。
          </Note>
        </NearObjects>

        <CellWindow />

        <ThunderBadge>
          <svg width="24" height="24" viewBox="0 0 24 24" aria-hidden="true">
            <path d="M0 0H24V24H0z" fill="#2f8a3b" />
            <path d="M3 6 10 9 12 12 13 3C16 6 16 9 15 11L21 11 16 14C15 18 11 20 6 20L10 16 5 12 9 12z" fill="#e9f7e6" />
          </svg>
          <ThunderName>迅雷7</ThunderName>
        </ThunderBadge>
        <SiteLink href="#home">http://hhs</SiteLink>
        <SiteLogo>
          <Chick />
          3DM<b>GAME</b>
        </SiteLogo>
      </Desktop>
    </>
  );
};

export default App;
